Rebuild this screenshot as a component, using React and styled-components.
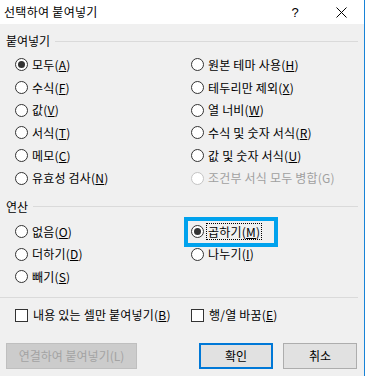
import React from 'react';
import styled, { createGlobalStyle, css } from 'styled-components';

const Global = createGlobalStyle`
  html, body { margin: 0; padding: 0; background: #fff; }
  body {
    font-family: "Noto Sans CJK KR", "Noto Sans", sans-serif;
    font-size: 12px;
    color: #000;
  }
  u { text-decoration-thickness: 1px; text-underline-offset: 1px; }
`;

const Window = styled.div`
  width: 365px;
  height: 376px;
  box-sizing: border-box;
  border-right: 1px solid #1883d7;
  display: flex;
  flex-direction: column;
  background: #f0f0f0;
  overflow: hidden;
`;

const TitleBar = styled.div`
  flex: none;
  height: 24px;
  background: #fff;
  display: flex;
  align-items: center;
  padding-left: 4px;
`;

const Title = styled.div`
  flex: 1;
  font-size: 12px;
  line-height: 16px;
  letter-spacing: 0.3px;
`;

const TitleButton = styled.div`
  width: 46px;
  height: 24px;
  display: flex;
  align-items: center;
  justify-content: center;
  font-size: 13px;
  font-family: "Liberation Sans", sans-serif;
`;

const Body = styled.div`
  flex: 1;
  display: flex;
  flex-direction: column;
  padding: 9px 6px 0 6px;
`;

const GroupHeader = styled.div`
  display: flex;
  align-items: center;
  gap: 5px;
  height: 16px;
  line-height: 16px;
  margin-top: ${p => p.$mt || 0}px;
  &::after {
    content: '';
    flex: 1;
    height: 1px;
    background: #dadada;
  }
`;

const OptionGrid = styled.div`
  display: grid;
  grid-template-columns: 176px 1fr;
  grid-auto-rows: 22.67px;
  padding-left: 9px;
  margin-top: ${p => p.$mt || 0}px;
`;

const Option = styled.div`
  display: flex;
  align-items: center;
  gap: 4px;
  line-height: 16px;
  white-space: nowrap;
  color: ${p => (p.$disabled ? '#a0a0a0' : '#000')};
  ${p => p.$highlight && css`
    position: relative;
    &::before {
      content: '';
      position: absolute;
      left: -7px;
      top: -3px;
      width: 94px;
      height: 30px;
      box-sizing: border-box;
      border: 4px solid #00a2ed;
    }
  `}
`;

const Radio = styled.span`
  flex: none;
  width: 13px;
  height: 13px;
  box-sizing: border-box;
  border-radius: 50%;
  border: 1px solid ${p => (p.$disabled ? '#c4c4c4' : '#333')};
  background: #fff;
  display: flex;
  align-items: center;
  justify-content: center;
  &::after {
    content: '';
    width: 7px;
    height: 7px;
    border-radius: 50%;
    background: #333;
    display: ${p => (p.$checked ? 'block' : 'none')};
  }
`;

const Label = styled.span`
  letter-spacing: 0.2px;
  ${p => p.$focus && css`
    border: 1px dotted #000;
    padding: 0 1px;
    margin-left: -2px;
    line-height: 15px;
  `}
`;

const Separator = styled.div`
  height: 1px;
  background: #dadada;
  margin: 9px 0 0 -6px;
`;

const CheckRow = styled.div`
  display: grid;
  grid-template-columns: 176px 1fr;
  height: 16px;
  padding-left: 9px;
  margin-top: 9px;
`;

const CheckItem = styled.div`
  display: flex;
  align-items: center;
  gap: 5px;
  line-height: 16px;
  white-space: nowrap;
`;

const Box = styled.span`
  flex: none;
  width: 13px;
  height: 13px;
  box-sizing: border-box;
  border: 1px solid #333;
  background: #fff;
`;

const ButtonRow = styled.div`
  display: flex;
  align-items: center;
  margin-top: 20px;
  height: 26px;
  padding-right: 1px;
`;

const Button = styled.div`
  box-sizing: border-box;
  height: 26px;
  width: ${p => p.$w}px;
  display: flex;
  align-items: center;
  justify-content: center;
  line-height: 16px;
  background: ${p => (p.$disabled ? '#cccccc' : '#e1e1e1')};
  color: ${p => (p.$disabled ? '#a3a3a3' : '#000')};
  border: ${p => (p.$default ? '2px solid #0078d7' : p.$disabled ? '1px solid #bfbfbf' : '1px solid #adadad')};
  margin-left: ${p => p.$ml || 0}px;
`;

const Spacer = styled.div`flex: 1;`;

const pasteOptions = [
  [{ t: '모두', k: 'A', checked: true }, { t: '원본 테마 사용', k: 'H' }],
  [{ t: '수식', k: 'F' }, { t: '테두리만 제외', k: 'X' }],
  [{ t: '값', k: 'V' }, { t: '열 너비', k: 'W' }],
  [{ t: '서식', k: 'T' }, { t: '수식 및 숫자 서식', k: 'R' }],
  [{ t: '메모', k: 'C' }, { t: '값 및 숫자 서식', k: 'U' }],
  [{ t: '유효성 검사', k: 'N' }, { t: '조건부 서식 모두 병합', k: 'G', disabled: true }],
];

const opOptions = [
  [{ t: '없음', k: 'O' }, { t: '곱하기', k: 'M', checked: true, highlight: true }],
  [{ t: '더하기', k: 'D' }, { t: '나누기', k: 'I' }],
  [{ t: '빼기', k: 'S' }, null],
];

function RadioOption({ o }) {
  if (!o) return <div />;
  return (
    <Option $disabled={o.disabled} $highlight={o.highlight}>
      <Radio $checked={o.checked} $disabled={o.disabled} />
      <Label $focus={o.highlight}>
        {o.t}({o.disabled ? o.k : <u>{o.k}</u>})
      </Label>
    </Option>
  );
}

export default function App() {
  return (
    <>
      <Global />
      <Window>
        <TitleBar>
          <Title>선택하여 붙여넣기</Title>
          <TitleButton>?</TitleButton>
          <TitleButton>
            <svg width="11" height="11" viewBox="0 0 11 11">
              <path d="M0.5 0.5 L10.5 10.5 M10.5 0.5 L0.5 10.5" stroke="#000" strokeWidth="1" />
            </svg>
          </TitleButton>
        </TitleBar>
        <Body>
          <GroupHeader>붙여넣기</GroupHeader>
          <OptionGrid $mt={4.65}>
            {pasteOptions.flat().map((o, i) => <RadioOption key={i} o={o} />)}
          </OptionGrid>
          <GroupHeader $mt={9.35}>연산</GroupHeader>
          <OptionGrid $mt={5.3}>
            {opOptions.flat().map((o, i) => <RadioOption key={i} o={o} />)}
          </OptionGrid>
          <Separator />
          <CheckRow>
            <CheckItem><Box /><Label>내용 있는 셀만 붙여넣기(<u>B</u>)</Label></CheckItem>
            <CheckItem><Box /><Label>행/열 바꿈(<u>E</u>)</Label></CheckItem>
          </CheckRow>
          <ButtonRow>
            <Button $w={131} $disabled>연결하여 붙여넣기(L)</Button>
            <Spacer />
            <Button $w={74} $default>확인</Button>
            <Button $w={74} $ml={10}>취소</Button>
          </ButtonRow>
        </Body>
      </Window>
    </>
  );
}
